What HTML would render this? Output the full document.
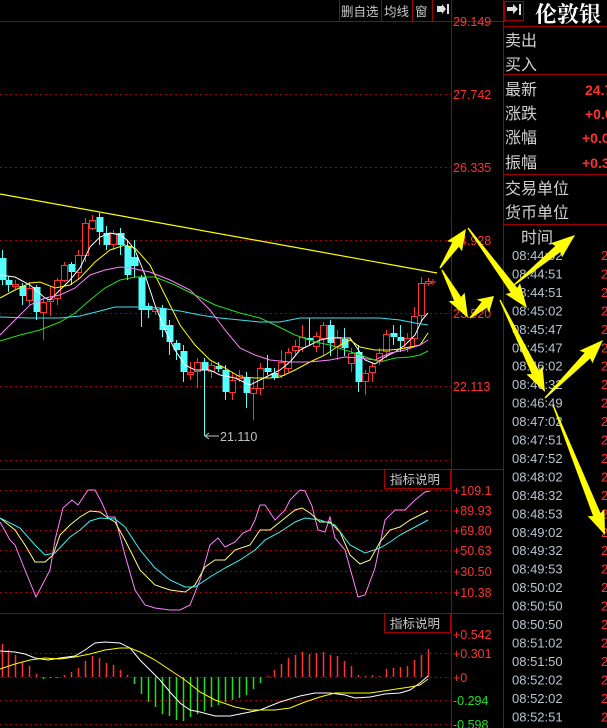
<!DOCTYPE html>
<html><head><meta charset="utf-8"><style>
body{margin:0;background:#000;width:607px;height:728px;overflow:hidden;font-family:"Liberation Sans","Noto Sans CJK SC",sans-serif}
svg{position:absolute;left:0;top:0}
</style></head><body>
<svg id="s" width="607" height="728" xmlns="http://www.w3.org/2000/svg" font-family="Liberation Sans, Noto Sans CJK SC, sans-serif">
<g id="grid" stroke="#a00000" stroke-width="1" stroke-dasharray="2,3">
<line x1="0" x2="451" y1="94.5" y2="94.5"/><line x1="0" x2="451" y1="167.5" y2="167.5"/><line x1="0" x2="451" y1="240.5" y2="240.5"/><line x1="0" x2="451" y1="313.5" y2="313.5"/><line x1="0" x2="451" y1="386.5" y2="386.5"/><line x1="0" x2="451" y1="460.5" y2="460.5"/>
<line x1="0" x2="451" y1="490.5" y2="490.5"/><line x1="0" x2="451" y1="510.5" y2="510.5"/><line x1="0" x2="451" y1="530.5" y2="530.5"/><line x1="0" x2="451" y1="550.5" y2="550.5"/><line x1="0" x2="451" y1="571.5" y2="571.5"/><line x1="0" x2="451" y1="592.5" y2="592.5"/>
<line x1="0" x2="451" y1="653.5" y2="653.5"/><line x1="0" x2="451" y1="677.5" y2="677.5"/><line x1="0" x2="451" y1="700.5" y2="700.5"/><line x1="0" x2="451" y1="724.5" y2="724.5"/>
</g>
<g stroke="#a00000" stroke-width="1" fill="none">
<line x1="0" x2="503" y1="21.5" y2="21.5"/>
<line x1="451.5" x2="451.5" y1="0" y2="728"/>
<line x1="503.5" x2="503.5" y1="0" y2="728"/>
<line x1="0" x2="503" y1="469.5" y2="469.5"/>
<line x1="0" x2="503" y1="613.5" y2="613.5"/>
<line x1="339.5" x2="339.5" y1="0" y2="21"/><line x1="381.5" x2="381.5" y1="0" y2="21"/><line x1="412.5" x2="412.5" y1="0" y2="21"/><line x1="432.5" x2="432.5" y1="0" y2="21"/>
<rect x="384.5" y="469.5" width="66" height="19"/><rect x="384.5" y="613.5" width="66" height="19"/>
<rect x="504.5" y="1.5" width="19" height="19"/>
<line x1="503" x2="607" y1="26.5" y2="26.5"/><line x1="503" x2="607" y1="74.5" y2="74.5"/><line x1="503" x2="607" y1="174.5" y2="174.5"/><line x1="503" x2="607" y1="224.5" y2="224.5"/>
</g>
<g fill="#c8c8c8" font-size="12.5"><text x="341" y="16">删自选</text><text x="384" y="16">均线</text><text x="415" y="16">窗</text></g>
<path d="M437,6h5v-2l4,5-4,5v-2h-5z M447,4h2v10h-2z" fill="#e0e0e0"/>
<path d="M507,7h6v-3l5,5-5,5v-3h-6z M519,4h2v11h-2z" fill="#e0e0e0"/>
<text x="535" y="22" font-size="22" font-weight="bold" fill="#ffffff" font-family="Liberation Serif, Noto Serif CJK SC, serif">伦敦银</text>
<g fill="#d0d0d0" font-size="16">
<text x="505" y="46">卖出</text><text x="505" y="70">买入</text>
<text x="505" y="95">最新</text><text x="505" y="119">涨跌</text><text x="505" y="143">涨幅</text><text x="505" y="168">振幅</text>
<text x="505" y="194">交易单位</text><text x="505" y="218">货币单位</text>
<text x="521" y="243">时间</text>
</g>
<g fill="#ff3030" font-size="14" font-weight="bold"><text x="585" y="95">24.7</text><text x="585" y="119">+0.0</text><text x="582" y="143">+0.0</text><text x="582" y="168">+0.3</text></g>
<g fill="#ff3232" font-size="12.5">
<text x="453" y="26">29.149</text><text x="453" y="99">27.742</text><text x="453" y="172">26.335</text><text x="453" y="245">24.928</text><text x="453" y="318">23.520</text><text x="453" y="391">22.113</text>
<text x="453" y="495">+109.1</text><text x="453" y="515">+89.93</text><text x="453" y="535">+69.80</text><text x="453" y="555">+50.63</text><text x="453" y="576">+30.50</text><text x="453" y="597">+10.38</text>
<text x="453" y="639">+0.542</text><text x="453" y="658">+0.301</text><text x="453" y="682">+0</text>
</g>
<g fill="#20e020" font-size="12.5"><text x="453" y="705">-0.294</text><text x="453" y="729">-0.598</text></g>
<g fill="#c8c8c8" font-size="12.5"><text x="390" y="484">指标说明</text><text x="390" y="628">指标说明</text></g>
<text x="220" y="441" fill="#c0c0c0" font-size="12.5">21.110</text>
<path d="M205,436h14 M205,436l4,-3 M205,436l4,3" stroke="#c0c0c0" fill="none"/>
<g id="tm" fill="#b8c4d0" font-size="13"></g>
<g id="tr" fill="#ff3030" font-size="13"></g>
<g id="cd"></g>
<g id="ln" fill="none" stroke-width="1"></g>
<line x1="0" y1="194" x2="437" y2="273" stroke="#ffff00" stroke-width="1.2"/>
<g id="ar" fill="#ffff00"></g>
</svg>
<script>
var NS="http://www.w3.org/2000/svg",s=document.getElementById('s');
function el(p,t,a){var e=document.createElementNS(NS,t);for(var k in a)e.setAttribute(k,a[k]);p.appendChild(e);return e}
var tm=["08:44:02","08:44:51","08:44:51","08:45:02","08:45:47","08:45:47","08:46:02","08:46:32","08:46:49","08:47:02","08:47:51","08:47:52","08:48:02","08:48:32","08:48:53","08:49:02","08:49:32","08:49:53","08:50:02","08:50:50","08:50:50","08:51:02","08:51:50","08:52:02","08:52:02","08:52:51"];
var g=document.getElementById('tm'),r=document.getElementById('tr');
tm.forEach(function(t,i){var y=260+i*18.45;el(g,'text',{x:512,y:y}).textContent=t;el(r,'text',{x:601,y:y}).textContent="2"});
var C=[[2,258,280,250,285,0],[8,280,285,276,292,0],[15,284,286,280,290,1],[22,286,296,283,305,0],[29,288,300,282,305,1],[36,287,312,285,320,0],[43,302,312,298,340,1],[50,299,301,287,316,1],[57,280,298,278,305,1],[64,265,280,262,282,1],[71,264,272,262,285,0],[78,255,272,250,280,1],[85,223,255,218,262,1],[92,220,228,215,230,1],[99,217,232,213,245,0],[106,233,245,226,250,0],[113,233,244,230,250,1],[120,233,245,228,255,0],[127,246,275,240,280,0],[134,257,266,240,278,0],[141,277,310,275,327,0],[148,306,310,303,318,0],[155,309,311,306,315,1],[162,308,330,305,337,0],[169,325,342,320,355,0],[176,343,350,340,360,0],[183,351,372,345,382,0],[190,372,374,362,380,1],[197,362,371,358,388,1],[204,362,370,358,436,0],[211,365,371,362,378,1],[218,366,369,362,372,0],[225,370,392,365,400,0],[232,380,392,372,400,1],[239,375,378,370,382,1],[246,378,393,372,408,0],[253,388,393,380,420,1],[260,368,388,363,395,1],[267,368,372,355,375,0],[274,373,378,368,380,0],[281,362,375,350,378,1],[288,352,368,348,372,1],[295,346,350,340,355,1],[302,337,347,325,352,1],[309,338,340,318,345,0],[316,336,346,332,352,1],[323,325,338,322,355,1],[330,325,343,320,356,0],[337,337,346,330,360,1],[344,339,348,328,356,0],[351,353,363,348,372,1],[358,352,382,345,392,0],[365,373,381,370,395,1],[372,366,372,362,382,1],[379,353,360,348,365,1],[386,334,351,330,358,1],[393,333,337,325,345,0],[400,337,341,325,352,0],[407,338,347,333,352,1],[414,316,338,307,345,1],[421,283,315,277,322,1],[428,281,283,278,286,1]];
var cd=document.getElementById('cd');
C.forEach(function(c){var col=c[5]?'#ff3232':'#54ffff';el(cd,'line',{x1:c[0]+0.5,x2:c[0]+0.5,y1:c[3],y2:c[4],stroke:col});
 if(c[5])el(cd,'rect',{x:c[0]-2.5,y:c[1]+0.5,width:6,height:Math.max(c[2]-c[1],1),fill:'#000',stroke:col});
 else el(cd,'rect',{x:c[0]-2.5,y:c[1],width:7,height:Math.max(c[2]-c[1],1),fill:col});});
var B=[[2,644],[8,650],[15,655],[22,662],[29,666],[36,674],[43,679],[50,678],[57,678],[64,675],[71,672],[78,668],[85,661],[92,656],[99,658],[106,663],[113,665],[120,670],[127,675],[134,684],[141,694],[148,702],[155,707],[162,714],[169,716],[176,720],[183,721],[190,717],[197,714],[204,711],[211,707],[218,705],[225,702],[232,700],[239,698],[246,695],[253,689],[260,683],[268,676],[274,670],[281,664],[288,658],[295,655],[302,652],[309,654],[316,653],[323,652],[330,655],[337,656],[344,661],[351,666],[358,675],[365,676],[372,675],[379,676],[386,669],[393,668],[400,667],[407,666],[414,660],[421,655],[428,649]];
B.forEach(function(b){el(cd,'line',{x1:b[0]+0.5,x2:b[0]+0.5,y1:677,y2:b[1],stroke:b[1]<677?'#ff3232':'#20e020','stroke-width':1.5})});
var L=[
['#ffffff',"0,275 15,277 30,285 45,298 50,300 60,290 70,280 80,268 90,247 100,237 110,233 120,235 127,240 135,250 145,275 155,305 165,330 175,350 185,365 195,370 210,370 220,375 235,378 250,385 260,380 270,375 280,370 290,362 300,350 310,345 320,340 330,338 340,338 350,338 355,345 365,360 375,364 385,357 395,352 405,345 415,335 422,320 428,313"],
['#ffff00',"0,298 15,290 30,283 40,282 55,288 70,285 80,278 95,262 110,250 125,245 135,248 150,265 165,295 180,325 195,345 210,360 225,368 240,377 255,378 270,378 280,377 295,370 310,362 325,355 340,345 350,340 360,347 375,350 390,350 400,349 410,347 420,345 428,333"],
['#ff80ff',"0,335 15,320 30,305 45,298 60,295 75,288 90,275 105,270 120,267 130,268 150,272 170,280 190,290 210,310 225,330 240,348 255,355 270,360 290,362 310,362 330,360 345,357 360,358 375,360 390,353 405,350 420,345 428,340"],
['#20e020',"0,341 20,335 40,330 60,322 75,313 90,300 105,288 120,280 135,277 155,277 175,285 195,295 215,305 240,313 260,318 275,325 295,335 315,342 330,345 345,350 360,355 380,362 395,358 410,357 420,355 428,351"],
['#40e0f0',"0,317 30,318 60,318 80,316 100,311 115,307 140,307 160,308 180,311 200,315 220,318 240,320 260,322 280,322 300,318 320,318 340,318 360,318 380,318 400,320 415,323 428,325"],
['#ff80ff',"0,522 10,540 15,545 25,570 36,597 50,570 55,540 63,508 72,500 78,505 88,490 95,490 102,503 108,517 115,517 125,555 135,590 145,605 155,608 170,610 180,610 190,605 200,580 210,545 218,538 225,547 235,542 243,533 250,530 255,520 260,505 265,505 275,520 285,510 290,500 300,490 305,491 312,506 318,530 325,532 330,517 335,538 345,550 358,597 365,595 375,568 385,520 395,510 405,510 415,500 425,492 430,491"],
['#ffff80',"0,518 15,530 25,545 35,562 45,562 53,555 60,535 70,525 80,517 90,511 100,512 108,518 115,522 125,540 140,570 155,585 170,590 185,592 195,585 205,567 215,560 225,560 235,550 250,545 260,530 270,530 280,522 295,510 302,508 310,513 320,522 330,522 340,532 350,555 360,564 370,560 380,542 390,530 400,527 410,520 420,515 428,511"],
['#40f0f0',"0,518 20,528 35,545 45,555 55,553 70,537 80,530 90,521 100,518 115,519 125,527 140,550 155,568 170,580 185,587 195,587 210,577 225,568 240,560 255,550 265,540 280,532 295,522 305,518 320,520 335,525 350,545 365,553 380,548 390,542 400,535 415,527 428,520"],
['#ffffff',"0,651 15,652 25,654 35,658 48,660 60,658 75,656 85,650 95,643 105,642 120,643 130,648 140,660 150,670 160,680 170,692 180,703 190,710 200,712 215,716 230,716 245,713 260,710 280,702 300,696 315,693 330,693 345,695 355,698 370,697 385,694 400,693 410,690 420,683 428,676"],
['#ffff00',"0,669 15,664 30,660 45,658 60,659 75,657 90,654 105,650 120,648 130,648 140,652 155,660 170,670 185,680 200,692 215,700 235,707 250,710 275,710 290,708 305,702 320,697 335,693 350,693 370,693 390,690 410,687 420,685 428,679"]];
var ln=document.getElementById('ln');
L.forEach(function(l){el(ln,'polyline',{points:l[1],stroke:l[0]})});
el(cd,'path',{d:"M430,282h6M433,279v6",stroke:'#ff3232'});
var A=[[440,268,466,229],[442,270,468,318],[470,318,494,296],[468,228,527,308],[514,285,575,235],[500,300,545,392],[545,398,603,340],[553,405,605,535]];
var ar=document.getElementById('ar');
A.forEach(function(a){var dx=a[2]-a[0],dy=a[3]-a[1],L=Math.hypot(dx,dy),ux=dx/L,uy=dy/L,nx=-uy,ny=ux;
 var hl=Math.min(22,L*0.4),bx=a[2]-ux*hl,by=a[3]-uy*hl,sw=4,hw=9;
 var p=[[a[0]+nx*0.7,a[1]+ny*0.7],[bx+nx*sw,by+ny*sw],[bx+nx*hw-ux*2,by+ny*hw-uy*2],[a[2],a[3]],[bx-nx*hw-ux*2,by-ny*hw-uy*2],[bx-nx*sw,by-ny*sw],[a[0]-nx*0.7,a[1]-ny*0.7]];
 el(ar,'polygon',{points:p.map(function(q){return q[0].toFixed(1)+','+q[1].toFixed(1)}).join(' ')});});
</script>
</body></html>
